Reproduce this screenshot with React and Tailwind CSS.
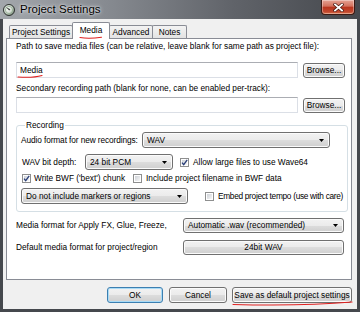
import React from "react";

function Btn({ children, className = "", def = false }) {
  return (
    <div
      className={`flex items-center justify-center rounded-[3px] border ${
        def
          ? "border-[#3c7fb1] shadow-[inset_0_0_0_1px_#a9dbf6]"
          : "border-[#707070] shadow-[inset_0_0_0_1px_#fbfbfb]"
      } bg-[linear-gradient(#f2f2f2,#ebebeb_50%,#dddddd_50%,#cfcfcf)] text-[8.3px] leading-none text-black whitespace-nowrap ${className}`}
    >
      {children}
    </div>
  );
}

function Arrow() {
  return (
    <svg width="5" height="3" viewBox="0 0 5 3" className="shrink-0">
      <path d="M0 0H5L2.5 3Z" fill="#000" />
    </svg>
  );
}

function Combo({ children, className = "" }) {
  return (
    <div
      className={`flex items-center rounded-[3px] border border-[#707070] bg-[linear-gradient(#f2f2f2,#ebebeb_50%,#dddddd_50%,#cfcfcf)] shadow-[inset_0_0_0_1px_#fbfbfb] pl-[4px] pr-[5px] text-[8.3px] leading-none text-black ${className}`}
    >
      <span className="flex-1 whitespace-nowrap">{children}</span>
      <Arrow />
    </div>
  );
}

function Check({ checked = false }) {
  return (
    <div className="relative w-[9px] h-[9px] shrink-0 border border-[#8e8f8f] bg-white p-[1px]">
      <div className="w-full h-full bg-[linear-gradient(135deg,#cdd1d7,#f7f7f7)]" />
      {checked && (
        <svg
          width="9"
          height="9"
          viewBox="0 0 9 9"
          className="absolute left-[-1px] top-[-1px]"
        >
          <path
            d="M2 4.6L3.7 6.6L7.2 1.8"
            fill="none"
            stroke="#2a3f78"
            strokeWidth="1.3"
          />
        </svg>
      )}
    </div>
  );
}

function Input({ children, className = "" }) {
  return (
    <div
      className={`flex items-center border border-[#dbdfe6] border-t-[#abadb3] bg-white pl-[3px] text-[8.3px] leading-none text-black ${className}`}
    >
      {children}
    </div>
  );
}

export default function App() {
  return (
    <div className="w-[360px] h-[312px] flex flex-col overflow-hidden bg-[#45484d] font-['Liberation_Sans',Arial,sans-serif] text-black">
      {/* title bar */}
      <div className="relative h-[19px] shrink-0 flex items-center bg-[linear-gradient(90deg,#a3a7ac_0%,#868a90_30%,#606369_65%,#45484d_100%)]">
        <div className="ml-[3px] w-[12px] h-[12px] shrink-0">
          <svg width="12" height="12" viewBox="0 0 12 12">
            <defs>
              <radialGradient id="ic" cx="40%" cy="40%" r="60%">
                <stop offset="0" stopColor="#ffffff" />
                <stop offset="0.7" stopColor="#c9d2c8" />
                <stop offset="1" stopColor="#7c8a7c" />
              </radialGradient>
            </defs>
            <circle cx="6" cy="6" r="5.5" fill="url(#ic)" stroke="#2e3430" strokeWidth="1" />
            <path d="M2.5 2.8L6.2 6.6L7.4 5.2Z" fill="#3b423d" />
            <circle cx="6" cy="6" r="3.6" fill="none" stroke="#7aa07a" strokeWidth="0.6" />
          </svg>
        </div>
        <span className="ml-[5px] text-[11.5px] leading-none text-black [text-shadow:0_0_4px_#e8eaec,0_0_2px_#e8eaec]">
          Project Settings
        </span>
        <div className="ml-auto mr-[5px] self-start w-[34px] h-[15px] rounded-b-[4px] border border-t-0 border-[#3b1a14] bg-[linear-gradient(#e6a394_0%,#d2705c_45%,#b8341d_50%,#c2482f_85%,#dd7a4f_100%)] shadow-[inset_0_0_0_1px_rgba(255,255,255,0.35)] flex items-center justify-center">
          <svg width="11" height="9" viewBox="0 0 11 9">
            <path d="M2 1.5L9 7.5M9 1.5L2 7.5" stroke="#4a1a12" strokeWidth="3.2" strokeLinecap="square" />
            <path d="M2 1.5L9 7.5M9 1.5L2 7.5" stroke="#ffffff" strokeWidth="1.8" strokeLinecap="square" />
          </svg>
        </div>
      </div>

      {/* body */}
      <div className="relative flex-1 ml-[3px] mr-[3px] mb-[3px] bg-[#f0f0f0] flex flex-col pl-[3px] pr-[5px] pt-[3px] text-[8.3px] leading-none">
        {/* tabs */}
        <div className="h-[16px] flex items-end pl-[3px] relative z-10">
          <div className="w-[64px] h-[13px] border border-b-0 border-[#898c95] bg-[linear-gradient(#f3f3f3,#e3e3e3)] flex items-center justify-center rounded-t-[2px] whitespace-nowrap">
            Project Settings
          </div>
          <div className="w-[38px] h-[17px] -ml-[1px] -mb-[1px] border border-b-0 border-[#898c95] bg-white flex items-center justify-center rounded-t-[2px] pb-[1px]">
            Media
          </div>
          <div className="w-[44px] h-[13px] -ml-[1px] border border-b-0 border-[#898c95] bg-[linear-gradient(#f3f3f3,#e3e3e3)] flex items-center justify-center rounded-t-[2px]">
            Advanced
          </div>
          <div className="w-[35px] h-[13px] -ml-[1px] border border-b-0 border-[#898c95] bg-[linear-gradient(#f3f3f3,#e3e3e3)] flex items-center justify-center rounded-t-[2px]">
            Notes
          </div>
        </div>

        {/* panel */}
        <div className="h-[242px] border border-[#898c95] bg-white flex flex-col pl-[9px] pr-[5px]">
          <div className="mt-[2px] h-[11px] flex items-center whitespace-nowrap">
            Path to save media files (can be relative, leave blank for same path as project file):
          </div>
          <div className="mt-[10px] h-[16px] flex items-center">
            <Input className="w-[282px] h-[16px]">Media</Input>
            <Btn className="ml-[5px] w-[42px] h-[15px]">Browse...</Btn>
          </div>
          <div className="mt-[5px] h-[11px] flex items-center whitespace-nowrap">
            Secondary recording path (blank for none, can be enabled per-track):
          </div>
          <div className="mt-[3px] h-[16px] flex items-center">
            <Input className="w-[282px] h-[16px]" />
            <Btn className="ml-[5px] w-[42px] h-[15px]">Browse...</Btn>
          </div>

          {/* group box */}
          <fieldset className="mt-[7px] border border-[#d5dfe5] rounded-[3px] pl-[4px] pb-[7px] pr-[4px]">
            <legend className="ml-[4px] px-[1px] h-[11px] leading-[11px] text-[#000]">Recording</legend>
            <div className="mt-[1px] h-[16px] flex items-center">
              <span className="w-[121px] whitespace-nowrap tracking-[-0.1px]">Audio format for new recordings:</span>
              <Combo className="w-[188px] h-[16px]">WAV</Combo>
            </div>
            <div className="mt-[6px] h-[16px] flex items-center">
              <span className="w-[64px] whitespace-nowrap pl-[1px]">WAV bit depth:</span>
              <Combo className="w-[88px] h-[16px]">24 bit PCM</Combo>
              <div className="ml-[7px] flex items-center gap-[4px] whitespace-nowrap">
                <Check checked />
                <span>Allow large files to use Wave64</span>
              </div>
            </div>
            <div className="mt-[3px] h-[10px] flex items-center">
              <div className="ml-[1px] w-[111px] flex items-center gap-[3px] whitespace-nowrap">
                <Check checked />
                <span>Write BWF ('bext') chunk</span>
              </div>
              <div className="flex items-center gap-[4px] whitespace-nowrap">
                <Check />
                <span>Include project filename in BWF data</span>
              </div>
            </div>
            <div className="mt-[5px] h-[16px] flex items-center">
              <Combo className="w-[167px] h-[16px]">Do not include markers or regions</Combo>
              <div className="ml-[17px] flex items-center gap-[4px] whitespace-nowrap">
                <Check />
                <span className="tracking-[-0.3px]">Embed project tempo (use with care)</span>
              </div>
            </div>
          </fieldset>

          <div className="mt-[6px] h-[15px] flex items-center">
            <span className="w-[167px] whitespace-nowrap">Media format for Apply FX, Glue, Freeze,</span>
            <Combo className="w-[161px] h-[15px]">Automatic .wav (recommended)</Combo>
          </div>
          <div className="mt-[7px] h-[15px] flex items-center">
            <span className="w-[167px] whitespace-nowrap">Default media format for project/region</span>
            <Btn className="w-[161px] h-[15px]">24bit WAV</Btn>
          </div>
        </div>

        {/* bottom buttons */}
        <div className="mt-[7px] h-[16px] flex items-center justify-end">
          <Btn def className="w-[56px] h-[16px]">OK</Btn>
          <Btn className="ml-[6px] w-[58px] h-[16px]">Cancel</Btn>
          <Btn className="ml-[5px] w-[120px] h-[16px] border-[#404040]">Save as default project settings</Btn>
        </div>

        {/* red annotations */}
        <svg className="absolute left-0 top-0 pointer-events-none z-20" width="354" height="290" viewBox="0 0 354 290">
          <path d="M77 18.5C83 19.6 92 19.2 98.5 18.2" fill="none" stroke="#e02020" strokeWidth="1.1" strokeLinecap="round" />
          <path d="M15 58C22 58.5 32 58.5 39 56.5" fill="none" stroke="#e02020" strokeWidth="1.1" strokeLinecap="round" />
          <path d="M230 285.5C270 286.5 320 285.5 349 283" fill="none" stroke="#e02020" strokeWidth="1.1" strokeLinecap="round" />
        </svg>
      </div>
    </div>
  );
}
